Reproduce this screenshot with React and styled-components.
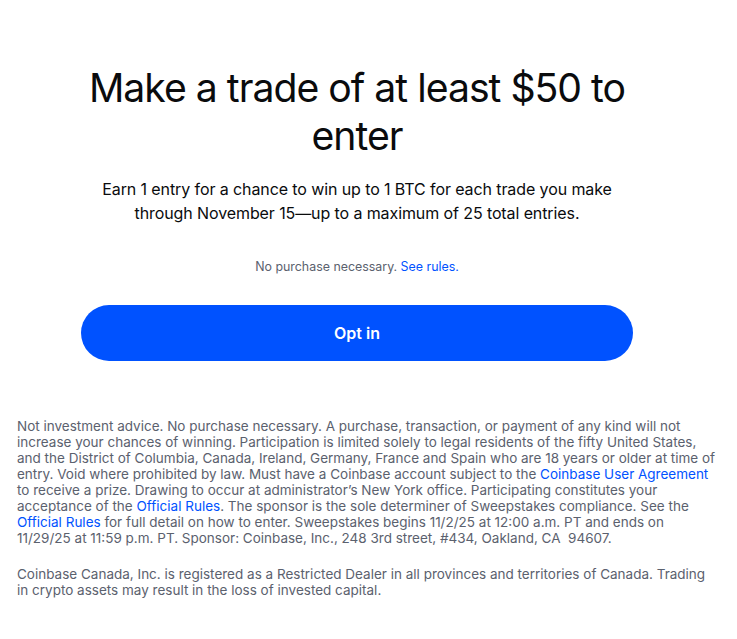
import React from "react";
import styled, { createGlobalStyle } from "styled-components";

const Global = createGlobalStyle`
  html, body { margin: 0; padding: 0; background: #ffffff; }
  body { font-family: Inter, "Noto Sans", sans-serif; -webkit-font-smoothing: antialiased; }
  * { box-sizing: border-box; }
`;

const Page = styled.main`
  width: 737px;
  padding: 64px 17px 40px 17px;
  display: flex;
  flex-direction: column;
`;

const Hero = styled.section`
  width: 552px;
  margin-left: 64px;
  display: flex;
  flex-direction: column;
  align-items: center;
  text-align: center;
`;

const Title = styled.h1`
  margin: 0;
  font-family: Inter, sans-serif;
  font-weight: 400;
  font-size: 39.2px;
  line-height: 48px;
  letter-spacing: -1px;
  color: #0a0b0d;
  white-space: nowrap;
`;

const Lead = styled.p`
  margin: 17px 0 0;
  font-size: 16px;
  line-height: 24px;
  letter-spacing: -0.1px;
  color: #0a0b0d;
`;

const Note = styled.p`
  margin: 34px 0 0;
  font-size: 12.4px;
  line-height: 16px;
  color: #5b616e;
`;

const Link = styled.a`
  color: #0052ff;
  text-decoration: none;
`;

const OptButton = styled.button`
  margin-top: 30px;
  width: 100%;
  height: 56px;
  border: none;
  border-radius: 28px;
  background: #0052ff;
  color: #ffffff;
  font-family: Inter, sans-serif;
  font-size: 16px;
  font-weight: 600;
  cursor: pointer;
`;

const Legal = styled.p`
  margin: ${(p) => (p.$first ? "57px" : "20px")} 0 0;
  font-size: 13.5px;
  line-height: 16px;
  color: #5b616e;
  white-space: nowrap;
`;

export default function App() {
  return (
    <>
      <Global />
      <Page>
        <Hero>
          <Title>
            Make a trade of at least $50 to
            <br />
            enter
          </Title>
          <Lead>
            Earn 1 entry for a chance to win up to 1 BTC for each trade you make
            <br />
            through November 15—up to a maximum of 25 total entries.
          </Lead>
          <Note>
            No purchase necessary. <Link href="#">See rules.</Link>
          </Note>
          <OptButton>Opt in</OptButton>
        </Hero>
        <Legal $first>
          Not investment advice. No purchase necessary. A purchase, transaction, or payment of any kind will not
          <br />
          increase your chances of winning. Participation is limited solely to legal residents of the fifty United States,
          <br />
          and the District of Columbia, Canada, Ireland, Germany, France and Spain who are 18 years or older at time of
          <br />
          entry. Void where prohibited by law. Must have a Coinbase account subject to the{" "}
          <Link href="#">Coinbase User Agreement</Link>
          <br />
          to receive a prize. Drawing to occur at administrator’s New York office. Participating constitutes your
          <br />
          acceptance of the <Link href="#">Official Rules</Link>. The sponsor is the sole determiner of Sweepstakes compliance. See the
          <br />
          <Link href="#">Official Rules</Link> for full detail on how to enter. Sweepstakes begins 11/2/25 at 12:00 a.m. PT and ends on
          <br />
          11/29/25 at 11:59 p.m. PT. Sponsor: Coinbase, Inc., 248 3rd street, #434, Oakland, CA&nbsp;&nbsp;94607.
        </Legal>
        <Legal>
          Coinbase Canada, Inc. is registered as a Restricted Dealer in all provinces and territories of Canada. Trading
          <br />
          in crypto assets may result in the loss of invested capital.
        </Legal>
      </Page>
    </>
  );
}
